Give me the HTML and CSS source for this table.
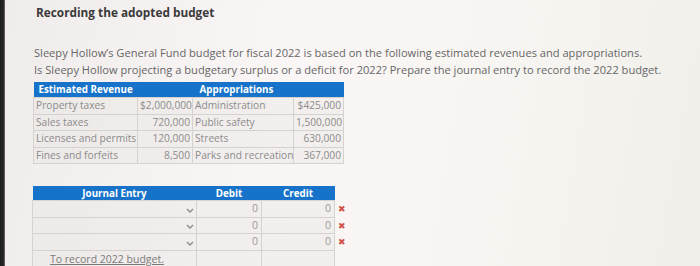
FILE: index.html
```html
<!DOCTYPE html>
<html>
<head>
<meta charset="utf-8">
<link rel="stylesheet" href="styles.css">
</head>
<body>
<div class="screen">
  <div class="bezel"></div>
  <main class="content">
    <h1 class="title">Recording the adopted budget</h1>
    <p class="intro">Sleepy Hollow’s General Fund budget for fiscal 2022 is based on the following estimated revenues and appropriations.<br>Is Sleepy Hollow projecting a budgetary surplus or a deficit for 2022? Prepare the journal entry to record the 2022 budget.</p>
    <table class="budget">
      <colgroup><col class="c1"><col class="c2"><col class="c3"><col class="c4"></colgroup>
      <thead>
        <tr><th class="left">Estimated Revenue</th><th colspan="3" class="center">Appropriations</th></tr>
      </thead>
      <tbody>
        <tr><td>Property taxes</td><td class="num">$2,000,000</td><td>Administration</td><td class="num">$425,000</td></tr>
        <tr><td>Sales taxes</td><td class="num">720,000</td><td>Public safety</td><td class="num">1,500,000</td></tr>
        <tr><td>Licenses and permits</td><td class="num">120,000</td><td>Streets</td><td class="num">630,000</td></tr>
        <tr><td>Fines and forfeits</td><td class="num">8,500</td><td>Parks and recreation</td><td class="num">367,000</td></tr>
      </tbody>
    </table>
    <table class="journal">
      <colgroup><col class="j1"><col class="j2"><col class="j3"><col class="j4"></colgroup>
      <thead>
        <tr><th>Journal Entry</th><th>Debit</th><th>Credit</th><th class="blank"></th></tr>
      </thead>
      <tbody>
        <tr><td class="sel"><span class="chev"><svg width="8" height="5" viewBox="0 0 8 5"><path d="M1 1 L4 4 L7 1" fill="none" stroke="#8a8a8a" stroke-width="1.3"/></svg></span></td><td class="num">0</td><td class="num">0</td><td class="x">✖</td></tr>
        <tr><td class="sel"><span class="chev"><svg width="8" height="5" viewBox="0 0 8 5"><path d="M1 1 L4 4 L7 1" fill="none" stroke="#8a8a8a" stroke-width="1.3"/></svg></span></td><td class="num">0</td><td class="num">0</td><td class="x">✖</td></tr>
        <tr><td class="sel"><span class="chev"><svg width="8" height="5" viewBox="0 0 8 5"><path d="M1 1 L4 4 L7 1" fill="none" stroke="#8a8a8a" stroke-width="1.3"/></svg></span></td><td class="num">0</td><td class="num">0</td><td class="x">✖</td></tr>
        <tr class="memo"><td><span class="memo-text">To record 2022 budget.</span></td><td></td><td></td><td class="blank"></td></tr>
      </tbody>
    </table>
  </main>
</div>
</body>
</html>
```
FILE: styles.css
```css
html, body {
  margin: 0;
  padding: 0;
  width: 700px;
  height: 266px;
  overflow: hidden;
  background: #f4f1f0;
}
.screen {
  display: flex;
  height: 266px;
  font-family: "Open Sans", "Liberation Sans", sans-serif;
}
.bezel {
  width: 5px;
  flex: none;
  background: linear-gradient(90deg, #1c1c1c 0, #2a2a2a 80%, #8d8a88 100%);
}
.content {
  flex: 1;
  padding-left: 28px;
  background: linear-gradient(100deg, #f0eceb 0%, #faf6f6 40%, #f7f5f1 70%, #f0efea 100%);
}
.title {
  margin: 4px 0 0 3px;
  font-size: 11.8px;
  line-height: 16px;
  font-weight: 700;
  color: #3a3a3a;
  white-space: nowrap;
}
.intro {
  margin: 24px 0 0 1px;
  font-size: 11.1px;
  line-height: 17px;
  color: #666;
  white-space: nowrap;
}
.budget, .journal {
  border-collapse: collapse;
  table-layout: fixed;
  font-size: 10.2px;
  color: #8c8c8c;
}
.budget {
  margin-top: 4px;
  width: 310px;
}
.budget .c1 { width: 104px; }
.budget .c2 { width: 55px; }
.budget .c3 { width: 101px; }
.budget .c4 { width: 50px; }
.budget th, .journal th {
  background: #1673c9;
  color: #fff;
  font-weight: 700;
  font-size: 9.8px;
  height: 15px;
  padding: 0;
  line-height: 13px;
  white-space: nowrap;
}
.budget th.left { text-align: left; padding-left: 5px; }
.budget th.center { text-align: center; padding-right: 8px; }
.budget td {
  height: 15.5px;
  padding: 0 2px 0 2px;
  border: 1px solid #d6d2d0;
  white-space: nowrap;
  line-height: 13px;
  background: rgba(230, 226, 224, 0.35);
}
.budget td.num { text-align: right; }
.journal {
  margin-top: 22px;
  margin-left: -1px;
  width: 312px;
}
.journal .j1 { width: 164px; }
.journal .j2 { width: 65px; }
.journal .j3 { width: 73px; }
.journal .j4 { width: 10px; }
.journal th { height: 14px; text-align: center; }
.journal th.blank { background: transparent; }
.journal td {
  height: 15.5px;
  padding: 0 3px;
  border: 1px solid #d6d2d0;
  line-height: 13px;
  background: rgba(230, 226, 224, 0.35);
}
.journal td.num { text-align: right; font-size: 10.5px; color: #999; }
.journal td.sel { text-align: right; padding-right: 2px; }
.chev { display: inline-block; vertical-align: middle; }
.journal td.x {
  border: none;
  background: transparent;
  color: #d0504a;
  font-size: 9px;
  padding: 0 0 0 3px;
}
.journal td.blank { border: none; background: transparent; }
.memo td { height: 14px; vertical-align: top; padding-top: 2px; }
.memo-text {
  display: inline-block;
  padding-left: 14px;
  text-decoration: underline;
  color: #7a7a7a;
  font-size: 10.5px;
  line-height: 11px;
}
```
